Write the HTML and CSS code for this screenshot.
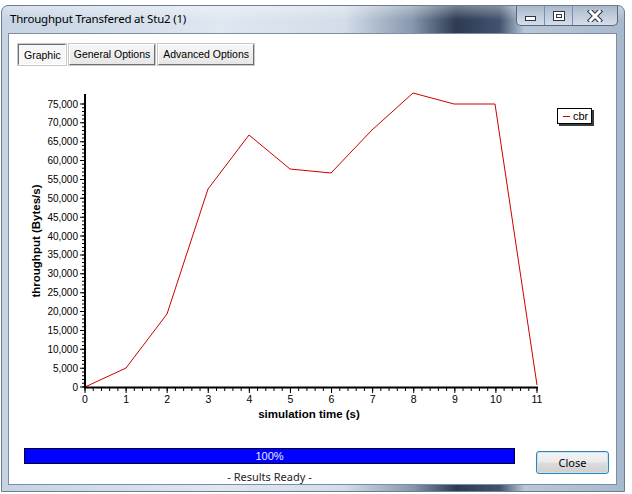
FILE: index.html
```html
<html>
<head>
<title>Throughput Transfered at Stu2 (1)</title>
<link rel="stylesheet" href="styles.css">
</head>
<body>
<div class="window">
    <div class="titlebar">
        <span class="title">Throughput Transfered at Stu2 (1)</span>
        <div class="controls">
            <div class="ctl ctl-min"><span class="glyph-min"></span></div>
            <div class="ctl ctl-max"><span class="glyph-max"></span></div>
            <div class="ctl ctl-close">
                <svg width="16" height="12" viewBox="0 0 16 12">
                    <path d="M3.5 1.5 L12.5 10.5 M12.5 1.5 L3.5 10.5" stroke="#2b3440" stroke-width="5" stroke-linecap="square"/>
                    <path d="M3.5 1.5 L12.5 10.5 M12.5 1.5 L3.5 10.5" stroke="#ffffff" stroke-width="3" stroke-linecap="square"/>
                </svg>
            </div>
        </div>
    </div>
    <div class="client">
        <div class="tabs">
            <div class="tab active">Graphic</div>
            <div class="tab">General Options</div>
            <div class="tab">Advanced Options</div>
        </div>
        <svg class="chart" width="609" height="361" viewBox="0 0 609 361">
            <g transform="translate(-8,-69)">
                <!-- line -->
                <polyline fill="none" stroke="#cc0000" stroke-width="1"
                    points="84,386 125,367 166,313 207,188 248,134 289,168 330,172 371,129 412,92 453,103 494,103 536,384"/>
                <!-- axes -->
                <line x1="84" y1="93" x2="84" y2="387" stroke="#000" stroke-width="2"/>
                <line x1="83" y1="386.5" x2="537" y2="386.5" stroke="#000" stroke-width="2"/>
                <!-- y ticks -->
                <line x1="82.5" y1="386.5" x2="82.5" y2="102" stroke="#000" stroke-width="3" stroke-dasharray="1 2.7734"/>
                <line x1="81.5" y1="386.5" x2="81.5" y2="102" stroke="#000" stroke-width="5" stroke-dasharray="1 17.867"/>
                <!-- x ticks -->
                <line x1="83.5" y1="388.5" x2="537" y2="388.5" stroke="#000" stroke-width="3" stroke-dasharray="1 7.218"/>
                <line x1="83.5" y1="389.5" x2="537" y2="389.5" stroke="#000" stroke-width="5" stroke-dasharray="1 40.09"/>
                <g class="ylab">
                    <text x="77" y="389.5">0</text>
                    <text x="77" y="370.6">5,000</text>
                    <text x="77" y="351.8">10,000</text>
                    <text x="77" y="332.9">15,000</text>
                    <text x="77" y="314">20,000</text>
                    <text x="77" y="295.2">25,000</text>
                    <text x="77" y="276.3">30,000</text>
                    <text x="77" y="257.4">35,000</text>
                    <text x="77" y="238.6">40,000</text>
                    <text x="77" y="219.7">45,000</text>
                    <text x="77" y="200.8">50,000</text>
                    <text x="77" y="182">55,000</text>
                    <text x="77" y="163.1">60,000</text>
                    <text x="77" y="144.2">65,000</text>
                    <text x="77" y="125.4">70,000</text>
                    <text x="77" y="106.5">75,000</text>
                </g>
                <g class="xlab">
                    <text x="84" y="402">0</text>
                    <text x="125.1" y="402">1</text>
                    <text x="166.2" y="402">2</text>
                    <text x="207.3" y="402">3</text>
                    <text x="248.4" y="402">4</text>
                    <text x="289.5" y="402">5</text>
                    <text x="330.5" y="402">6</text>
                    <text x="371.6" y="402">7</text>
                    <text x="412.7" y="402">8</text>
                    <text x="453.8" y="402">9</text>
                    <text x="494.9" y="402">10</text>
                    <text x="536" y="402">11</text>
                </g>
                <text class="axis-title" x="308" y="417">simulation time (s)</text>
                <text class="axis-title" transform="translate(39,240) rotate(-90)">throughput (Bytes/s)</text>
                <!-- legend -->
                <rect x="558" y="109" width="35" height="16" fill="#3a3a3a"/>
                <rect x="556.5" y="107.5" width="34" height="15" fill="#fff" stroke="#000" stroke-width="1"/>
                <line x1="562" y1="115.5" x2="569" y2="115.5" stroke="#cc0000" stroke-width="1"/>
                <text class="legend" x="572" y="119">cbr</text>
            </g>
        </svg>
        <div class="bottom">
            <div class="status">
                <div class="progress">100%</div>
                <div class="status-text">- Results Ready -</div>
            </div>
            <div class="close-btn">Close</div>
        </div>
    </div>
</div>
</body>
</html>
```

FILE: styles.css
```css
* {
    padding: 0;
    margin: 0;
    box-sizing: border-box;
}
body {
    background: #ffffff;
    font-family: "Liberation Sans", Arial, sans-serif;
    font-size: 12px;
    color: #000;
}
.window {
    margin: 5px 0 0 1px;
    width: 624px;
    height: 487px;
    border-radius: 7px 7px 0 0;
    border: 1px solid #6d7d92;
    background:
        linear-gradient(to bottom, rgba(255,255,255,0.35) 0px, rgba(255,255,255,0) 14px),
        linear-gradient(to right, #c6d3e3 0%, #dfe7f1 35%, #d3dde9 55%, #8797ad 66%, #2c3a52 73%, #43536f 80%, #b9c7d8 84%, #a9b9cd 100%);
    padding: 0 7px 6px 6px;
    display: flex;
    flex-direction: column;
}
.titlebar {
    height: 27px;
    display: flex;
    align-items: flex-start;
}
.title {
    font-family: "Noto Sans", "Liberation Sans", sans-serif;
    font-size: 11.5px;
    color: #000;
    margin-top: 5px;
    margin-left: 2px;
    letter-spacing: -0.2px;
}
.controls {
    margin-left: auto;
    margin-right: -1px;
    display: flex;
    height: 20px;
    border: 1px solid #56677f;
    border-top: none;
    border-radius: 0 0 5px 5px;
    overflow: hidden;
    background: linear-gradient(to bottom, #a9b8cb, #c4d0de 60%, #d5dee9);
}
.ctl {
    height: 19px;
    display: flex;
    align-items: center;
    justify-content: center;
    border-right: 1px solid #7e8ea4;
}
.ctl-min { width: 28px; }
.ctl-max { width: 28px; }
.ctl-close { width: 44px; border-right: none; }
.glyph-min {
    width: 11px;
    height: 5px;
    margin-top: 5px;
    background: #fff;
    border: 1px solid #2b3440;
}
.glyph-max {
    width: 12px;
    height: 10px;
    border: 1px solid #2b3440;
    background: #fff;
    box-shadow: inset 0 0 0 2px #fff, inset 0 0 0 3px #2b3440;
}
.client {
    flex: 1;
    background: #ffffff;
    border: 1px solid #7d8ea4;
    display: flex;
    flex-direction: column;
}
.tabs {
    display: flex;
    gap: 3px;
    padding: 10px 0 0 9px;
}
.tab {
    height: 21px;
    padding: 0 4px;
    line-height: 19px;
    font-size: 10.5px;
    color: #000;
    background: linear-gradient(to bottom, #f6f6f6, #e6e6e6);
    border: 1px solid;
    border-color: #ffffff #6e6e6e #6e6e6e #ffffff;
    box-shadow: 0 0 0 1px #c8c8c8;
}
.tab.active {
    background: #f7f7f7;
    border-color: #6e6e6e #ffffff #ffffff #6e6e6e;
    padding: 1px 4px 0 5px;
}
.chart {
    display: block;
    margin-top: 5px;
}
.chart text {
    font-family: "Liberation Sans", Arial, sans-serif;
    fill: #000;
}
.ylab text {
    font-size: 10px;
    text-anchor: end;
}
.xlab text {
    font-size: 10.5px;
    text-anchor: middle;
}
.chart .axis-title {
    font-size: 11.5px;
    font-weight: bold;
    text-anchor: middle;
}
.chart .legend {
    font-size: 11px;
}
.bottom {
    display: flex;
    align-items: flex-start;
    margin-top: 17px;
    padding-left: 15px;
}
.status {
    width: 491px;
    display: flex;
    flex-direction: column;
    align-items: center;
}
.progress {
    width: 100%;
    height: 16px;
    background: #0000ff;
    border: 1px solid #00003a;
    color: #e8ecff;
    font-size: 11px;
    line-height: 14px;
    text-align: center;
}
.status-text {
    margin-top: 5px;
    font-family: "Noto Sans", "Liberation Sans", sans-serif;
    font-size: 11px;
    color: #222;
}
.close-btn {
    margin-left: auto;
    margin-right: 7px;
    margin-top: 3px;
    width: 73px;
    height: 23px;
    border: 1px solid #3c7fb1;
    border-radius: 3px;
    background: linear-gradient(to bottom, #f4f4f4 0%, #ebebeb 45%, #dcdcdc 55%, #cfcfcf 100%);
    box-shadow: inset 0 0 0 1px #bfe6f7;
    font-family: "Noto Sans", "Liberation Sans", sans-serif;
    font-size: 11px;
    line-height: 21px;
    text-align: center;
    color: #000;
}
```
